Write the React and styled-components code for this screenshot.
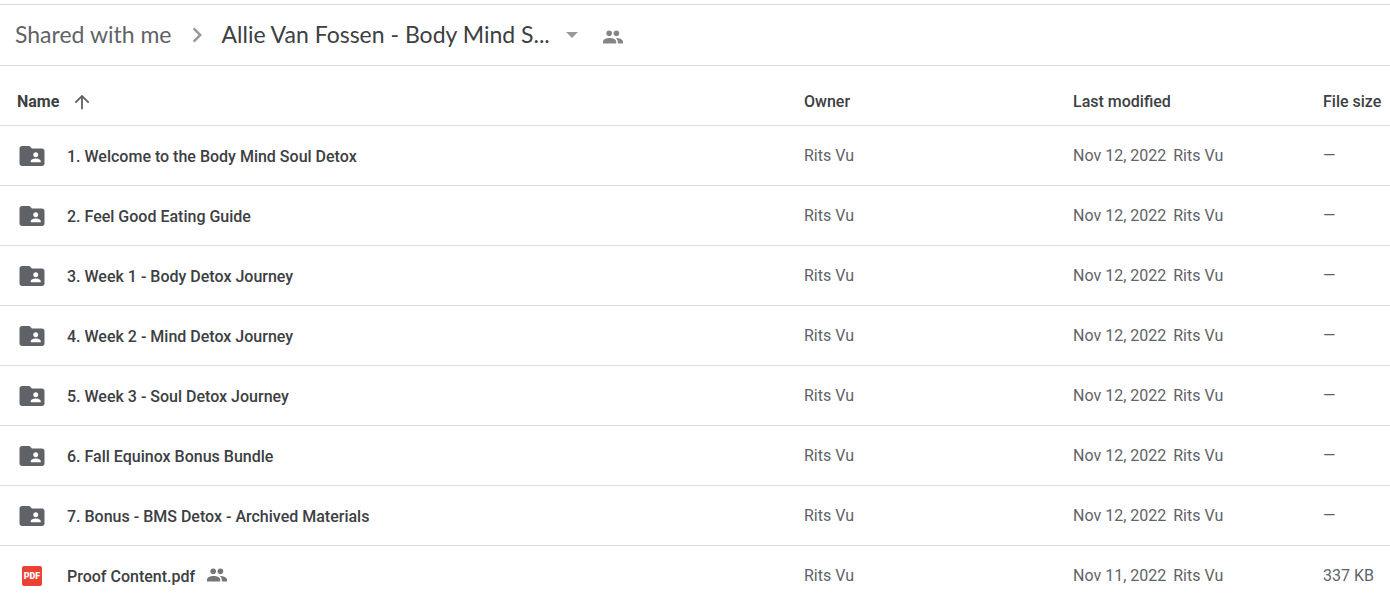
import styled, { createGlobalStyle } from "styled-components";

const folders = [
  "1. Welcome to the Body Mind Soul Detox",
  "2. Feel Good Eating Guide",
  "3. Week 1 - Body Detox Journey",
  "4. Week 2 - Mind Detox Journey",
  "5. Week 3 - Soul Detox Journey",
  "6. Fall Equinox Bonus Bundle",
  "7. Bonus - BMS Detox - Archived Materials",
];

const files = [
  ...folders.map((name) => ({
    name,
    type: "folder",
    owner: "Rits Vu",
    modified: "Nov 12, 2022",
    size: "—",
  })),
  {
    name: "Proof Content.pdf",
    type: "pdf",
    shared: true,
    owner: "Rits Vu",
    modified: "Nov 11, 2022",
    size: "337 KB",
  },
];

const PeopleIcon = () => (
  <svg width="20" height="14" viewBox="0 0 20 14" fill="currentColor" aria-hidden="true">
    <circle cx="6.2" cy="3.2" r="2.8" />
    <circle cx="13.4" cy="3.2" r="2.8" />
    <path d="M0 13.500v-1.700C0 9.200 3.200 8 6.600 8s6.600 1.200 6.600 3.800v1.700z" />
    <path d="M12.800 8c3.600 0 7.200 1.200 7.200 3.800v1.700h-5.200v-1.700c0-1.600-.8-2.900-2-3.800z" />
  </svg>
);

const FolderIcon = () => (
  <svg width="30" height="30" viewBox="0 0 24 24" fill="#5f6368" aria-hidden="true">
    <path d="M20 6h-8l-2-2H4c-1.100 0-1.990.9-1.990 2L2 18c0 1.100.9 2 2 2h16c1.100 0 2-.9 2-2V8c0-1.100-.9-2-2-2zm-5 3c1.100 0 2 .9 2 2s-.9 2-2 2-2-.9-2-2 .9-2 2-2zm4 8h-8v-1c0-1.330 2.670-2 4-2s4 .67 4 2v1z" />
  </svg>
);

const ChevronIcon = () => (
  <svg width="30" height="30" viewBox="0 0 24 24" fill="#999" aria-hidden="true">
    <path d="M10 6 8.590 7.410 13.170 12l-4.580 4.590L10 18l6-6z" />
  </svg>
);

const CaretIcon = () => (
  <svg width="12" height="6" viewBox="0 0 12 6" fill="#999" aria-hidden="true">
    <path d="M0 0h12L6 6z" />
  </svg>
);

const ArrowUpIcon = () => (
  <svg width="22" height="22" viewBox="0 0 24 24" fill="#5f6368" aria-hidden="true">
    <path d="m4 12 1.410 1.410L11 7.830V20h2V7.830l5.580 5.590L20 12l-8-8-8 8z" />
  </svg>
);

const App = () => {
  return (
    <Page>
      <GlobalStyle />
      <Breadcrumbs aria-label="Breadcrumb">
        <ParentLink href="#shared">Shared with me</ParentLink>
        <ChevronIcon />
        <FolderButton type="button" aria-haspopup="menu">
          <FolderTitle>Allie Van Fossen - Body Mind S...</FolderTitle>
          <CaretIcon />
        </FolderButton>
        <ShareButton type="button" aria-label="Manage access">
          <PeopleIcon />
        </ShareButton>
      </Breadcrumbs>
      <FileTable>
        <thead>
          <tr>
            <HeadCell aria-sort="ascending">
              <SortButton type="button">
                Name
                <ArrowUpIcon />
              </SortButton>
            </HeadCell>
            <HeadCell $width="269px">Owner</HeadCell>
            <HeadCell $width="250px">Last modified</HeadCell>
            <HeadCell $width="67px">File size</HeadCell>
          </tr>
        </thead>
        <tbody>
          {files.map((file) => (
            <FileRow key={file.name}>
              <Cell>
                <NameBox>
                  <IconBox>
                    {file.type === "pdf" ? <PdfBadge>PDF</PdfBadge> : <FolderIcon />}
                  </IconBox>
                  <FileLink href="#file">{file.name}</FileLink>
                  {file.shared && (
                    <SharedMark>
                      <PeopleIcon />
                    </SharedMark>
                  )}
                </NameBox>
              </Cell>
              <Cell>{file.owner}</Cell>
              <Cell>
                <Modified>
                  <span>{file.modified}</span>
                  <span>{file.owner}</span>
                </Modified>
              </Cell>
              <Cell>{file.size}</Cell>
            </FileRow>
          ))}
        </tbody>
      </FileTable>
    </Page>
  );
};

const GlobalStyle = createGlobalStyle`
  * {
    box-sizing: border-box;
  }
  body {
    margin: 0;
    background: #fff;
    color: #3c4043;
    font-family: Roboto, "Liberation Sans", sans-serif;
    font-size: 16px;
    line-height: 20px;
  }
  button {
    border: none;
    background: none;
    padding: 0;
    color: inherit;
    font: inherit;
    cursor: pointer;
  }
  svg {
    display: block;
    flex-shrink: 0;
  }
`;

const Page = styled.main`
  height: 100vh;
  padding-top: 4px;
  overflow-y: auto;
  scrollbar-width: none;
`;

const Breadcrumbs = styled.nav`
  display: flex;
  align-items: center;
  height: 62px;
  padding-left: 15px;
  border-top: 1px solid #dadce0;
  border-bottom: 1px solid #dadce0;
  font-family: Lato, sans-serif;
  font-size: 23px;
  line-height: 28px;
  white-space: nowrap;
`;

const ParentLink = styled.a`
  margin-right: 10px;
  padding-bottom: 2px;
  color: #5f6368;
  text-decoration: none;
`;

const FolderButton = styled.button`
  display: flex;
  align-items: center;
  gap: 16px;
  margin-left: 10px;
`;

const FolderTitle = styled.span`
  padding-bottom: 2px;
`;

const ShareButton = styled.button`
  margin-left: 25px;
  padding-top: 4px;
  color: #858585;
`;

const FileTable = styled.table`
  width: 100%;
  border-collapse: separate;
  border-spacing: 0;
  table-layout: fixed;
`;

const HeadCell = styled.th`
  width: ${(props) => props.$width || "auto"};
  height: 60px;
  padding: 12px 0 0;
  border-bottom: 1px solid #dadce0;
  font-weight: 500;
  text-align: left;
  white-space: nowrap;
`;

const SortButton = styled.button`
  display: flex;
  align-items: center;
  gap: 12px;
  padding-left: 17px;
  font-weight: 700;
`;

const Cell = styled.td`
  height: 60px;
  padding: 0;
  border-bottom: 1px solid #dadce0;
  color: #5f6368;
  white-space: nowrap;
`;

const FileRow = styled.tr`
  &:last-child ${Cell} {
    border-bottom-color: transparent;
  }
`;

const NameBox = styled.div`
  display: flex;
  align-items: center;
  padding-left: 17px;
`;

const IconBox = styled.span`
  display: flex;
  align-items: center;
  justify-content: center;
  width: 30px;
  height: 30px;
  margin-right: 20px;
`;

const PdfBadge = styled.span`
  width: 20px;
  height: 20px;
  border-radius: 2px;
  background: #ea4335;
  color: #fff;
  font-size: 9px;
  font-weight: 900;
  line-height: 20px;
  text-align: center;
`;

const FileLink = styled.a`
  padding-top: 2px;
  color: #3c4043;
  font-weight: 500;
  text-decoration: none;
`;

const SharedMark = styled.span`
  margin-left: 12px;
  padding-bottom: 2px;
  color: #757575;
`;

const Modified = styled.div`
  display: flex;
  gap: 7px;
`;

export default App;
